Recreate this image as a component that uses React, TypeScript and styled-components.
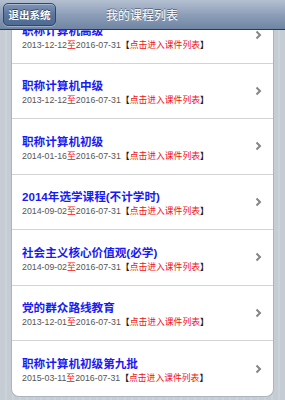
import React from 'react';
import styled, { createGlobalStyle } from 'styled-components';

const GlobalStyle = createGlobalStyle`
  html, body {
    margin: 0;
    padding: 0;
  }
  body {
    font-family: "Liberation Sans", "Noto Sans CJK SC", sans-serif;
    background: repeating-linear-gradient(90deg, #c5ccd4 0 5px, #cbd2d8 5px 7px);
    min-height: 100vh;
    overflow: hidden;
  }
`;

type Course = { title: string; start: string; end: string };

const courses: Course[] = [
  { title: '职称计算机高级', start: '2013-12-12', end: '2016-07-31' },
  { title: '职称计算机中级', start: '2013-12-12', end: '2016-07-31' },
  { title: '职称计算机初级', start: '2014-01-16', end: '2016-07-31' },
  { title: '2014年选学课程(不计学时)', start: '2014-09-02', end: '2016-07-31' },
  { title: '社会主义核心价值观(必学)', start: '2014-09-02', end: '2016-07-31' },
  { title: '党的群众路线教育', start: '2013-12-01', end: '2016-07-31' },
  { title: '职称计算机初级第九批', start: '2015-03-11', end: '2016-07-31' },
];

const Page = styled.div`
  width: 285px;
  height: 400px;
  overflow: hidden;
`;

const Toolbar = styled.header`
  position: fixed;
  top: 0;
  left: 0;
  right: 0;
  height: 29px;
  z-index: 2;
  display: flex;
  align-items: center;
  justify-content: center;
  background: linear-gradient(#b4c0d1 0%, #8d9fb8 50%, #6f85a3 100%);
  border-bottom: 1px solid #2e3846;
`;

const BackButton = styled.button`
  position: absolute;
  left: 3px;
  top: 3px;
  width: 53px;
  height: 23px;
  padding: 0;
  border: 1px solid #354660;
  border-radius: 5px;
  background: linear-gradient(#7d94b6 0%, #5a769f 50%, #4d6a94 100%);
  box-shadow: inset 0 1px 0 rgba(255, 255, 255, 0.35), 0 1px 0 rgba(255, 255, 255, 0.3);
  color: #fff;
  font-family: "Noto Sans CJK SC", sans-serif;
  font-size: 10.5px;
  font-weight: bold;
  text-shadow: 0 -1px 0 rgba(0, 0, 0, 0.5);
`;

const Title = styled.h1`
  margin: 0 0 0 -1px;
  color: #fff;
  font-family: "Noto Sans CJK SC", sans-serif;
  font-size: 12px;
  font-weight: normal;
  text-shadow: 0 -1px 0 rgba(40, 50, 70, 0.6);
`;

const Content = styled.main`
  padding: 8px 11px 0 11px;
`;

const Card = styled.ul`
  list-style: none;
  margin: 0;
  padding: 0;
  background: #fff;
  border: 1px solid #acb4bd;
  border-top: none;
  border-radius: 0 0 8px 8px;
  overflow: hidden;
`;

const Row = styled.li`
  height: 54.5px;
  display: flex;
  align-items: center;
  padding: 0 11px 0 10px;
  border-bottom: 1px solid #d4d4d4;

  &:last-child {
    border-bottom: none;
    height: 55px;
  }
`;

const Info = styled.div`
  flex: 1;
  min-width: 0;
  margin-top: 5px;
`;

const CourseName = styled.div`
  color: #1a1af5;
  font-size: 11.6px;
  font-weight: bold;
  line-height: 15px;
  white-space: nowrap;
`;

const Dates = styled.div`
  color: #555;
  font-size: 8.8px;
  line-height: 15px;
  white-space: nowrap;
`;

const Red = styled.span`
  color: #f01010;
`;

const Bracket = styled.span`
  color: #222;
  font-weight: bold;
`;

const Chevron = () => (
  <svg width="7" height="10" viewBox="0 0 7 10">
    <polyline points="1.5,1.5 5,5 1.5,8.5" fill="none" stroke="#858585" strokeWidth="2" />
  </svg>
);

const App: React.FC = () => (
  <Page>
    <GlobalStyle />
    <Toolbar>
      <BackButton>退出系统</BackButton>
      <Title>我的课程列表</Title>
    </Toolbar>
    <Content>
      <Card>
        {courses.map((c) => (
          <Row key={c.title}>
            <Info>
              <CourseName>{c.title}</CourseName>
              <Dates>
                {c.start}
                <Red>至</Red>
                {c.end}
                <Bracket>【</Bracket>
                <Red>点击进入课件列表</Red>
                <Bracket>】</Bracket>
              </Dates>
            </Info>
            <Chevron />
          </Row>
        ))}
      </Card>
    </Content>
  </Page>
);

export default App;
